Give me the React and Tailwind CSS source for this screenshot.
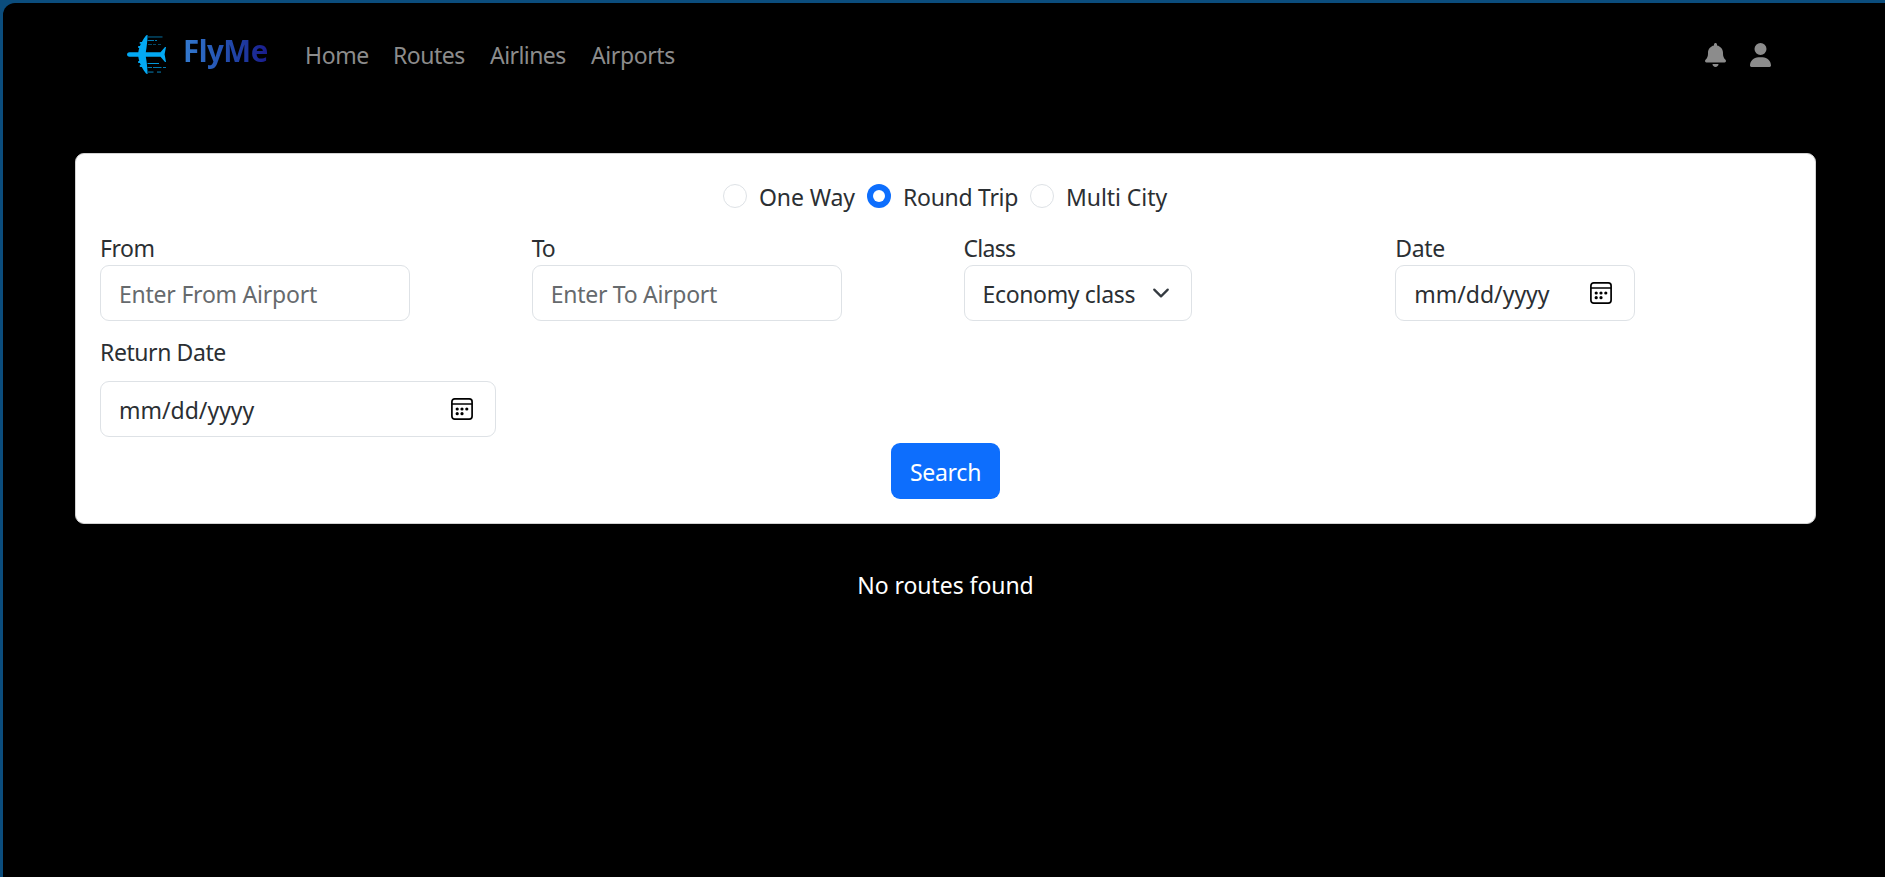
import { FaBell, FaUser } from 'react-icons/fa6';

const field = 'flex h-[56px] items-center justify-between rounded-[9px] border border-[#dee2e6] bg-white pl-[18px] leading-[56px]';
const label = 'h-9 leading-[38px]';

function Plane() {
  return (
    <svg className="h-[39px] w-[39px] shrink-0" viewBox="0 0 39 39">
      <g fill="#03a9f4">
        <path d="M2.5 17.2H11.3C12 13.5 12.8 10.8 14.3 8C15.8 5 17.5 2.5 19.2 0.3H20.8C20.2 6 19.9 11.5 18.8 17.2H33.5L38 12H39L37.6 19.3L39 27H38L33.5 21.7H18.8C19.9 27 20.2 33 20.8 38.7H19.2C17.5 36.5 15.8 34 14.3 31C12.8 28.2 12 25.5 11.3 21.7H2.5C-0.8 21.5-0.8 17.4 2.5 17.2Z" />
        <rect x="12.6" y="7" width="4" height="1.8" rx="0.9" />
        <rect x="11" y="11" width="4" height="1.9" rx="0.9" />
        <rect x="12.6" y="30.1" width="4" height="1.8" rx="0.9" />
        <rect x="11" y="26" width="4" height="1.9" rx="0.9" />
      </g>
      <g fill="#034766">
        <rect x="20.5" y="1" width="15" height="1.9" opacity="0.8" />
        <rect x="21" y="9" width="4" height="1" />
        <rect x="26" y="9" width="3" height="1" />
        <rect x="31" y="9" width="3" height="1" />
        <rect x="20.5" y="36.2" width="6" height="1.8" />
        <rect x="30" y="36.2" width="4" height="1.8" />
      </g>
      <g fill="#0279b0">
        <rect x="20.5" y="5" width="6.5" height="1" />
        <rect x="28" y="5" width="2" height="1" />
        <rect x="20.5" y="28" width="11.5" height="1" fill="#0397da" />
        <rect x="20.5" y="32" width="4.5" height="1" />
        <rect x="26" y="32" width="8.5" height="1" />
        <rect x="36" y="32" width="3" height="1" />
      </g>
    </svg>
  );
}

function CalendarIcon() {
  return (
    <svg className="mr-[22px] h-[22px] w-[22px]" viewBox="0 0 22 22" fill="none" stroke="#000" strokeWidth="1.7">
      <rect x="0.9" y="0.9" width="20.2" height="20.2" rx="2.8" />
      <path d="M1 6H21" strokeWidth="1.5" />
      <g fill="#000" stroke="none">
        <circle cx="6.2" cy="11" r="1.6" />
        <circle cx="11" cy="11" r="1.6" />
        <circle cx="15.8" cy="11" r="1.6" />
        <circle cx="6.2" cy="15.7" r="1.6" />
        <circle cx="11" cy="15.7" r="1.6" />
      </g>
    </svg>
  );
}

function Radio({ checked }) {
  return checked ? (
    <span className="mt-1.5 flex h-6 w-6 shrink-0 items-center justify-center rounded-full bg-[#0d6efd]">
      <span className="h-[12px] w-[12px] rounded-full bg-white" />
    </span>
  ) : (
    <span className="mt-1.5 h-6 w-6 shrink-0 rounded-full border border-[#dee2e6] bg-white" />
  );
}

export default function App() {
  return (
    <div className="h-[877px] w-full overflow-hidden bg-[#0b4d7d] pt-[3px] pl-[3px] font-['Noto_Sans',sans-serif] text-[23px]">
      <div className="h-full rounded-tl-[12px] bg-black pl-[72px]">
        <nav className="flex h-[150px] items-start whitespace-nowrap pt-8 pl-[52px] text-[#8c8c8c]">
          <Plane />
          <span className="ml-[17px] w-[122px] leading-9">
            <span className="-mt-[3px] inline-block bg-linear-to-r from-[#347bd0] to-[#1a1a8c] bg-clip-text text-[29.5px] leading-9 font-bold tracking-[-0.5px] text-transparent">FlyMe</span>
          </span>
          <a className="mt-0.5 w-[88px] leading-9 tracking-[-0.4px]">Home</a>
          <a className="mt-0.5 w-[97px] leading-9 tracking-[-0.5px]">Routes</a>
          <a className="mt-0.5 w-[101px] leading-9 tracking-[-0.57px]">Airlines</a>
          <a className="mt-0.5 leading-9 tracking-[-0.4px]">Airports</a>
          <div className="mr-[114px] ml-auto flex gap-6 pt-2">
            <FaBell className="h-6 w-[21px]" />
            <FaUser className="h-6 w-[21px]" />
          </div>
        </nav>

        <section className="w-[1741px] whitespace-nowrap rounded-[9px] border border-[#d2d2d2] bg-white p-6 text-[#2b2f33]">
          <div className="mb-[15px] flex h-9 pl-[623px] leading-[38px]">
            <label className="flex w-36">
              <Radio />
              <span className="ml-3 tracking-[-0.1px]">One Way</span>
            </label>
            <label className="flex w-[163px]">
              <Radio checked />
              <span className="ml-3 tracking-[-0.29px]">Round Trip</span>
            </label>
            <label className="flex">
              <Radio />
              <span className="ml-3 tracking-[-0.06px]">Multi City</span>
            </label>
          </div>

          <div className="-mr-9 grid grid-cols-4">
            <div>
              <div className={`${label} tracking-[-0.48px]`}>From</div>
              <div className={`${field} w-[310px] tracking-[-0.23px]`}>
                <span className="pt-0.5 text-[#666a6d]">Enter From Airport</span>
              </div>
            </div>
            <div>
              <div className={`${label} tracking-[-1.2px]`}>To</div>
              <div className={`${field} w-[310px] tracking-[-0.28px]`}>
                <span className="pt-0.5 text-[#666a6d]">Enter To Airport</span>
              </div>
            </div>
            <div>
              <div className={`${label} tracking-[-0.73px]`}>Class</div>
              <div className={`${field} w-[228px] tracking-[-0.34px]`}>
                <span className="pt-0.5">Economy class</span>
                <svg className="mr-[21px] h-[18px] w-[18px]" viewBox="0 0 16 16" fill="none" stroke="#343a40" strokeWidth="2" strokeLinecap="round" strokeLinejoin="round">
                  <path d="m2 5 6 6 6-6" />
                </svg>
              </div>
            </div>
            <div>
              <div className={`${label} tracking-[-0.35px]`}>Date</div>
              <div className={`${field} w-[240px]`}>
                <span className="pt-0.5">mm/dd/yyyy</span>
                <CalendarIcon />
              </div>
            </div>
            <div className="pt-3">
              <div className={`${label} mb-3 tracking-[-0.42px]`}>Return Date</div>
              <div className={`${field} w-[396px]`}>
                <span className="pt-0.5">mm/dd/yyyy</span>
                <CalendarIcon />
              </div>
            </div>
          </div>

          <div className="mt-1.5 flex justify-center">
            <button className="h-14 w-[109px] rounded-[9px] bg-[#0d6efd] leading-[58px] tracking-[-0.27px] text-white">Search</button>
          </div>
        </section>

        <p className="mt-[42px] w-[1741px] text-center leading-[38px] tracking-[-0.06px] text-white">No routes found</p>
      </div>
    </div>
  );
}
